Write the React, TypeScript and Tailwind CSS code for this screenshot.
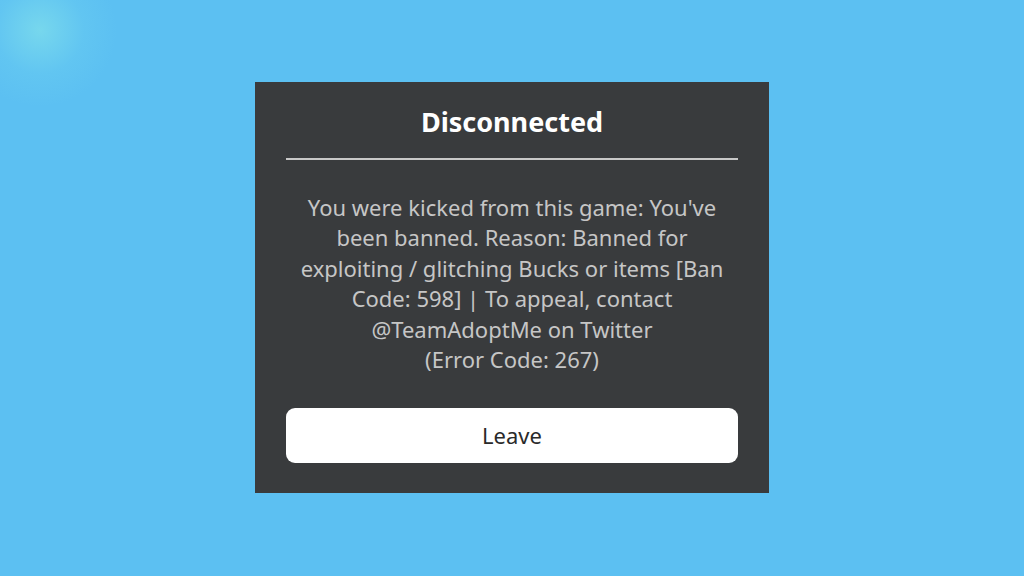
export default function App() {
  return (
    <div
      className="relative w-[1024px] h-[576px] bg-[#5cc0f2] overflow-hidden flex items-start justify-center pt-[82px]"
      style={{ fontFamily: '"Source Sans Pro", "Noto Sans", "Open Sans", sans-serif' }}
    >
      <div className="absolute left-[-40px] top-[-45px] w-[160px] h-[150px] rounded-full bg-[radial-gradient(circle,rgba(130,225,235,0.7)_0%,rgba(110,210,240,0.3)_40%,rgba(92,192,242,0)_70%)]" />
      <div className="relative w-[514px] h-[411px] bg-[#393b3d] flex flex-col items-center px-[31px]">
        <div className="h-[76px] flex items-center justify-center pt-[2px]">
          <span className="text-white font-bold text-[27px] leading-none">Disconnected</span>
        </div>
        <div className="w-full h-[2px] bg-[#c8c8c8]" />
        <div className="mt-[32px] text-center text-[#c6c6c6] text-[22px] leading-[30.4px] w-[444px]">
          You were kicked from this game: You've been banned. Reason: Banned for exploiting / glitching Bucks or items [Ban Code: 598] | To appeal, contact @TeamAdoptMe on Twitter
          <br />
          (Error Code: 267)
        </div>
        <button className="mt-auto mb-[30px] w-full h-[55px] rounded-[9px] bg-white text-[#2a2a2a] text-[22px] flex items-center justify-center">
          Leave
        </button>
      </div>
    </div>
  );
}
